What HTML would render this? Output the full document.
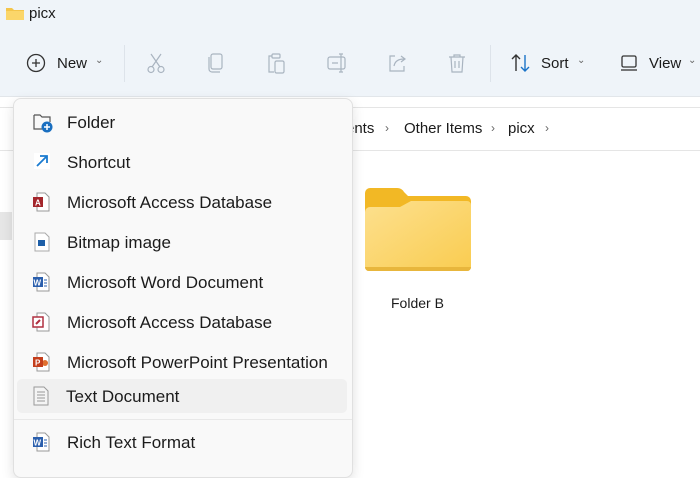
<!DOCTYPE html>
<html><head><style>
*{margin:0;padding:0;box-sizing:border-box}
body{width:700px;height:455px;overflow:hidden;background:#fff;font-family:"Liberation Sans",sans-serif;color:#1b1b1b;position:relative}
.top{position:absolute;left:0;top:0;width:700px;height:97px;background:#eff4f9;border-bottom:1px solid #e2e6ea}
.abs{position:absolute}
.tb{font-size:15px;color:#1b1b1b}
.menu{position:absolute;left:13px;top:98px;width:340px;height:380px;background:#f9f9f9;border:1px solid #e0e0e0;border-radius:8px;box-shadow:0 4px 12px rgba(0,0,0,.12)}
.it{position:absolute;left:67px;font-size:17px;color:#1b1b1b;white-space:nowrap}
.bc{position:absolute;top:120px;font-size:15px;white-space:nowrap}
.ch{position:absolute;top:121px;font-size:12px;color:#666}
</style></head><body>
<div class="top"></div>
<svg class="abs" style="left:5px;top:6px" width="20" height="16"><path d="M1 2h6l2 2h10v10H1z" fill="#f4c54a"/><path d="M1 5h18v9H1z" fill="#fbd66a"/></svg>
<div class="abs" style="left:29px;top:5px;font-size:15px">picx</div>
<svg class="abs" style="left:26px;top:53px" width="20" height="20"><circle cx="10" cy="10" r="8.5" fill="none" stroke="#333" stroke-width="1.3"/><path d="M10 6v8M6 10h8" stroke="#333" stroke-width="1.3"/></svg>
<div class="abs tb" style="left:57px;top:55px">New</div>
<div class="abs" style="left:95px;top:55px;font-size:10px;color:#666">⌄</div>
<div class="abs" style="left:124px;top:45px;width:1px;height:37px;background:#dde3ea"></div>
<svg class="abs" style="left:146px;top:52px" width="20" height="22" fill="none" stroke="#a9b4c0" stroke-width="1.2"><path d="M5 2l9 13M15 2L6 15"/><circle cx="5" cy="17.5" r="3"/><circle cx="15" cy="17.5" r="3"/></svg>
<svg class="abs" style="left:207px;top:52px" width="18" height="22" fill="none" stroke="#a9b4c0" stroke-width="1.2"><rect x="4" y="2" width="11" height="15" rx="2"/><path d="M2 5v12a3 3 0 0 0 3 3h8"/></svg>
<svg class="abs" style="left:266px;top:52px" width="20" height="22" fill="none" stroke="#a9b4c0" stroke-width="1.2"><path d="M6 4H3v16h5"/><rect x="6" y="2" width="8" height="4" rx="1"/><rect x="9" y="9" width="9" height="12" rx="1.5"/></svg>
<svg class="abs" style="left:326px;top:52px" width="22" height="22" fill="none" stroke="#a9b4c0" stroke-width="1.2"><rect x="2" y="5" width="17" height="12" rx="2"/><path d="M6 11h6M15 2v18M13 2h4M13 20h4"/></svg>
<svg class="abs" style="left:387px;top:53px" width="20" height="20" fill="none" stroke="#a9b4c0" stroke-width="1.2"><path d="M8 3H3v15h14v-5"/><path d="M7 13c1-5 5-7 10-7M14 3l4 3-4 3"/></svg>
<svg class="abs" style="left:447px;top:52px" width="20" height="22" fill="none" stroke="#a9b4c0" stroke-width="1.2"><path d="M2 5h16M7 5V3h6v2M4 5l1 15h10l1-15M8 9v7M12 9v7"/></svg>
<div class="abs" style="left:490px;top:45px;width:1px;height:37px;background:#dde3ea"></div>
<svg class="abs" style="left:510px;top:53px" width="22" height="20" fill="none" stroke-width="1.4"><path d="M6 18V2M2 6l4-4 4 4" stroke="#333"/><path d="M15 2v16M11 14l4 4 4-4" stroke="#1a73c8"/></svg>
<div class="abs tb" style="left:541px;top:55px">Sort</div>
<div class="abs" style="left:577px;top:55px;font-size:10px;color:#666">⌄</div>
<svg class="abs" style="left:619px;top:53px" width="20" height="20" fill="none" stroke="#333" stroke-width="1.3"><rect x="3" y="3" width="14" height="11" rx="1.5"/><path d="M2 17h16"/></svg>
<div class="abs tb" style="left:649px;top:55px">View</div>
<div class="abs" style="left:688px;top:55px;font-size:10px;color:#666">⌄</div>
<div class="abs" style="left:0;top:107px;width:700px;height:1px;background:#e5e5e5"></div>
<div class="abs" style="left:0;top:150px;width:700px;height:1px;background:#e5e5e5"></div>
<div class="bc" style="left:346px">ents</div>
<div class="ch" style="left:385px">›</div>
<div class="bc" style="left:404px">Other Items</div>
<div class="ch" style="left:491px">›</div>
<div class="bc" style="left:508px">picx</div>
<div class="ch" style="left:545px">›</div>
<div class="abs" style="left:0;top:212px;width:12px;height:28px;background:#e6e6e6"></div>
<svg class="abs" style="left:365px;top:187px" width="106" height="85"><defs><linearGradient id="g" x1="0" y1="0" x2="1" y2="1"><stop offset="0" stop-color="#fde08e"/><stop offset="1" stop-color="#f9cc50"/></linearGradient></defs><path d="M0 6a5 5 0 0 1 5-5h27a8 8 0 0 1 7 4l4 4h58a5 5 0 0 1 5 5v66a4 4 0 0 1-4 4H4a4 4 0 0 1-4-4z" fill="#f2b825"/><path d="M0 25a5 5 0 0 1 5-5h30l11-6h56a4 4 0 0 1 4 4v62a4 4 0 0 1-4 4H4a4 4 0 0 1-4-4z" fill="url(#g)"/><path d="M0 80h106a4 4 0 0 1-4 4H4a4 4 0 0 1-4-4z" fill="#e8b63c"/></svg>
<div class="abs" style="left:391px;top:295px;font-size:14px">Folder B</div>
<div class="menu"></div>
<div class="abs" style="left:17px;top:379px;width:330px;height:34px;background:#f0f0f0;border-radius:5px"></div>
<div class="abs" style="left:14px;top:419px;width:338px;height:1px;background:#e8e8e8"></div>
<svg class="abs" style="left:32px;top:112px" width="22" height="22"><path d="M2 3h6l2 2h8v5" fill="none" stroke="#555" stroke-width="1.2"/><path d="M2 3v14h8" fill="none" stroke="#555" stroke-width="1.2"/><circle cx="15" cy="15" r="5.5" fill="#1a6fc0"/><path d="M15 12v6M12 15h6" stroke="#fff" stroke-width="1.5"/></svg>
<div class="it" style="top:113px">Folder</div>
<svg class="abs" style="left:33px;top:152px" width="18" height="18"><rect x="1" y="1" width="16" height="16" fill="#fff"/><path d="M4 14L14 4M7 4h7v7" stroke="#1a7bd0" stroke-width="1.8" fill="none"/></svg>
<div class="it" style="top:153px">Shortcut</div>
<svg class="abs" style="left:32px;top:192px" width="18" height="20"><path d="M5 1h8l4 4v14H5z" fill="#fff" stroke="#999"/><rect x="1" y="5" width="10" height="10" fill="#a4262c"/><text x="3" y="13.5" font-size="8" fill="#fff" font-family="Liberation Sans" font-weight="bold">A</text></svg>
<div class="it" style="top:193px">Microsoft Access Database</div>
<svg class="abs" style="left:34px;top:232px" width="16" height="20"><path d="M1 1h10l4 4v14H1z" fill="#fff" stroke="#aaa"/><rect x="4" y="8" width="7" height="6" fill="#1e5fa8"/></svg>
<div class="it" style="top:233px">Bitmap image</div>
<svg class="abs" style="left:32px;top:272px" width="18" height="20"><path d="M5 1h8l4 4v14H5z" fill="#fff" stroke="#999"/><path d="M12 8h3M12 11h3M12 14h3" stroke="#2b5fad"/><rect x="1" y="5" width="10" height="10" fill="#2b5fad"/><text x="1.5" y="13.5" font-size="8" fill="#fff" font-family="Liberation Sans" font-weight="bold">W</text></svg>
<div class="it" style="top:273px">Microsoft Word Document</div>
<svg class="abs" style="left:32px;top:312px" width="18" height="20"><path d="M5 1h8l4 4v14H5z" fill="#fff" stroke="#999"/><rect x="1" y="5" width="10" height="10" fill="#fff" stroke="#b03040" stroke-width="1.5"/><path d="M4 12l4-4" stroke="#b03040" stroke-width="2"/></svg>
<div class="it" style="top:313px">Microsoft Access Database</div>
<svg class="abs" style="left:32px;top:352px" width="18" height="20"><path d="M5 1h8l4 4v14H5z" fill="#fff" stroke="#999"/><circle cx="13" cy="11" r="3" fill="#e07030"/><rect x="1" y="5" width="10" height="10" fill="#c43e1c"/><text x="3" y="13.5" font-size="8" fill="#fff" font-family="Liberation Sans" font-weight="bold">P</text></svg>
<div class="it" style="top:353px">Microsoft PowerPoint Presentation</div>
<svg class="abs" style="left:33px;top:386px" width="16" height="20"><path d="M1 1h10l4 4v14H1z" fill="#f4f4f4" stroke="#999"/><path d="M4 6h8M4 9h8M4 12h8M4 15h8" stroke="#999"/></svg>
<div class="it" style="top:387px;left:66px">Text Document</div>
<svg class="abs" style="left:32px;top:432px" width="18" height="20"><path d="M5 1h8l4 4v14H5z" fill="#fff" stroke="#999"/><path d="M12 8h3M12 11h3M12 14h3" stroke="#2b5fad"/><rect x="1" y="5" width="10" height="10" fill="#2b5fad"/><text x="1.5" y="13.5" font-size="8" fill="#fff" font-family="Liberation Sans" font-weight="bold">W</text></svg>
<div class="it" style="top:433px">Rich Text Format</div>
</body></html>
